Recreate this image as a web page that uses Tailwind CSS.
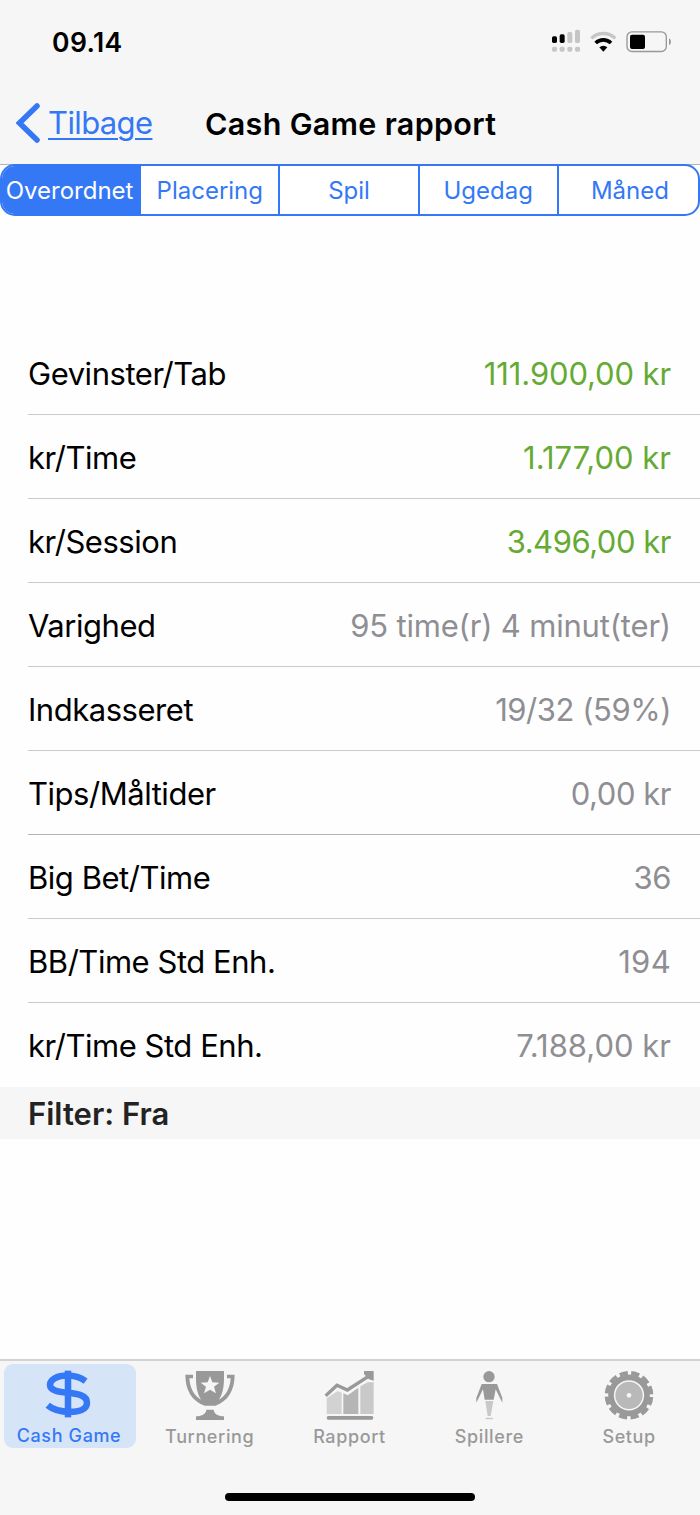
<!DOCTYPE html>
<html lang="da">
<head>
  <meta charset="UTF-8" />
  <meta name="viewport" content="width=device-width, initial-scale=1" />
  <title>Cash Game rapport</title>
  <script src="https://cdn.jsdelivr.net/npm/@tailwindcss/browser@4"></script>
</head>
<body class="bg-[#fefefe] font-['Inter',sans-serif] text-black">
  <div class="flex flex-col w-[700px] h-[1515px] overflow-hidden">

    <!-- Status bar + navigation -->
    <header class="h-[165px] shrink-0 bg-[#f6f6f6] border-b border-[#b4b4b4]">
      <div class="flex items-center justify-between h-[82px] pl-[52px] pr-[26px]">
        <span class="text-[26.5px] font-semibold leading-8 tracking-[0.015em] mt-[2px]">09.14</span>
        <svg class="w-[124px] h-[26px]" viewBox="600 84 372 78">
          <g fill="#000">
            <rect x="606" y="109" width="15" height="20" rx="5" />
            <rect x="629" y="103" width="15" height="26" rx="5" />
          </g>
          <g fill="#c6c6c6">
            <rect x="652" y="96" width="15" height="33" rx="5" />
            <rect x="675" y="89" width="15" height="40" rx="5" />
            <rect x="606" y="140" width="15" height="15" rx="5" />
            <rect x="629" y="140" width="15" height="15" rx="5" />
            <rect x="652" y="140" width="15" height="15" rx="5" />
            <rect x="675" y="140" width="15" height="15" rx="5" />
          </g>
          <path d="M724 115 A52 52 0 0 1 796 115" fill="none" stroke="#c6c6c6" stroke-width="10" />
          <path d="M737 129 A33 33 0 0 1 783 129" fill="none" stroke="#000" stroke-width="11" />
          <path d="M748 142 A17 17 0 0 1 772 142 L760 155 Z" fill="#000" />
          <rect x="831" y="95.500" width="118" height="59" rx="15" fill="none" stroke="#999" stroke-width="4" />
          <rect x="840" y="104" width="45" height="43" rx="6" fill="#000" />
          <path d="M957 115 Q963 117 963 125 Q963 133 957 135 Z" fill="#999" />
        </svg>
      </div>
      <div class="flex items-center h-[82px] pl-4">
        <svg class="w-6 h-10 shrink-0" viewBox="0 0 24 40">
          <path d="M21 3 L3.500 20 L21 37" fill="none" stroke="#3478f6" stroke-width="5.500" stroke-linecap="round" stroke-linejoin="miter" />
        </svg>
        <a href="#" class="w-[158px] pl-2 pt-px text-[31px] tracking-[-0.02em] whitespace-nowrap text-[#3478f6] underline decoration-2 underline-offset-4">Tilbage</a>
        <h1 class="text-[30.5px] font-semibold tracking-[0.01em] whitespace-nowrap pl-[7px] pt-px">Cash Game rapport</h1>
      </div>
    </header>

    <!-- Segmented control -->
    <nav class="grid grid-cols-5 h-[52px] shrink-0 -mt-px rounded-[15px] border-2 border-[#3478f6] overflow-hidden text-[24px] leading-[50px] text-center text-[#3478f6] bg-white divide-x-2 divide-[#3478f6]">
      <span class="bg-[#3478f6] text-white -ml-0.5">Overordnet</span>
      <span>Placering</span>
      <span>Spil</span>
      <span>Ugedag</span>
      <span class="pl-[3px]">Måned</span>
    </nav>

    <!-- Totals -->
    <dl class="mt-[115px] pl-7 text-[31px] tracking-[-0.015em]">
      <div class="flex items-center justify-between h-[84px] pt-1 pr-[29px] border-b border-[#cacaca]">
        <dt>Gevinster/Tab</dt><dd class="text-[#65aa33] tracking-[-0.004em]">111.900,00 kr</dd>
      </div>
      <div class="flex items-center justify-between h-[84px] pt-1 pr-[29px] border-b border-[#cacaca]">
        <dt>kr/Time</dt><dd class="text-[#65aa33] tracking-normal">1.177,00 kr</dd>
      </div>
      <div class="flex items-center justify-between h-[84px] pt-1 pr-[29px] border-b border-[#cacaca]">
        <dt>kr/Session</dt><dd class="text-[#65aa33]">3.496,00 kr</dd>
      </div>
      <div class="flex items-center justify-between h-[84px] pt-1 pr-[29px] border-b border-[#cacaca]">
        <dt>Varighed</dt><dd class="text-[#8e8e93] tracking-[-0.006em]">95 time(r) 4 minut(ter)</dd>
      </div>
      <div class="flex items-center justify-between h-[84px] pt-1 pr-[29px] border-b border-[#cacaca]">
        <dt>Indkasseret</dt><dd class="text-[#8e8e93]">19/32 (59%)</dd>
      </div>
      <div class="flex items-center justify-between h-[84px] pt-1 pr-[29px] border-b border-[#b4b4b4]">
        <dt>Tips/Måltider</dt><dd class="text-[#8e8e93]">0,00 kr</dd>
      </div>
      <div class="flex items-center justify-between h-[84px] pt-1 pr-[29px] border-b border-[#cacaca]">
        <dt>Big Bet/Time</dt><dd class="text-[#8e8e93]">36</dd>
      </div>
      <div class="flex items-center justify-between h-[84px] pt-1 pr-[29px] border-b border-[#cacaca]">
        <dt>BB/Time Std Enh.</dt><dd class="text-[#8e8e93] tracking-[0.01em]">194</dd>
      </div>
      <div class="flex items-center justify-between h-[84px] pt-[3px] pr-[29px]">
        <dt>kr/Time Std Enh.</dt><dd class="text-[#8e8e93] tracking-normal">7.188,00 kr</dd>
      </div>
    </dl>
    <div class="flex items-center h-[52px] shrink-0 pl-7 pt-0.5 bg-[#f6f6f6] text-[31px] font-semibold text-[#232323]">Filter: Fra</div>

    <!-- Tab bar -->
    <footer class="flex flex-col justify-between h-[156px] mt-auto shrink-0 bg-[#f6f6f6] border-t-2 border-[#d2d2d2] pt-[3px] pb-[14px]">
      <div class="grid grid-cols-5 w-[699px] text-[18px] font-medium leading-6 tracking-[0.035em] text-[#999]">
        <div class="flex flex-col items-center gap-[5px] w-[132px] h-[84px] ml-1 pt-[6px] rounded-[9px] bg-[#d6e4f7] text-[#3478f6]">
          <svg class="w-[50px] h-[50px] -ml-1" viewBox="129 60 150 150">
            <rect x="194" y="62" width="20" height="143" fill="#3478f6" />
            <path d="M258 94 C240 81 220 77 202 77 C172 77 149 88 149 105 C149 124 175 127 204 130 C237 133 262 139 262 160 C262 180 238 188 210 188 C180 188 158 182 142 168" fill="none" stroke="#3478f6" stroke-width="20" />
          </svg>
          <span class="whitespace-nowrap -ml-0.5">Cash Game</span>
        </div>
        <div class="flex flex-col items-center gap-[5px] pt-[6px]">
          <svg class="w-[50px] h-[50px]" viewBox="15 15 150 150" fill="#999">
            <path d="M16 29 H39 V40 H28 C30 70 42 92 63 104 C54 90 48 70 48 40 V18 H132 V40 C132 70 126 90 117 104 C138 92 150 70 152 40 H141 V29 H164 C164 75 145 108 106 122 H74 C35 108 16 75 16 29 Z" />
            <path d="M79 134 H101 C102 146 113 153 132 154 V165 H48 V154 C67 153 78 146 79 134 Z" />
            <path d="M90 33 L97 52 L118 53 L102 65 L108 85 L90 74 L72 85 L78 65 L62 53 L83 52 Z" fill="#f6f6f6" />
          </svg>
          <span>Turnering</span>
        </div>
        <div class="flex flex-col items-center gap-[5px] pt-[6px]">
          <svg class="w-[50px] h-[50px]" viewBox="165 60 150 150">
            <path d="M173 145 L206 123 L218 128 V192 H173 Z" fill="#d2d2d2" />
            <path d="M223 130 L236 136 L268 113 V192 H223 Z" fill="#b5b5b5" />
            <path d="M274 109 L296 97 H314 V192 H274 Z" fill="#c9c9c9" />
            <path d="M170 137 L204 106 L235 120 L303 76" fill="none" stroke="#999" stroke-width="10" />
            <path d="M285 63 H314 V92 L300 88 L285 72 Z" fill="#999" />
            <rect x="173" y="198" width="140" height="11" rx="5" fill="#999" />
          </svg>
          <span>Rapport</span>
        </div>
        <div class="flex flex-col items-center gap-[5px] pt-[6px]">
          <svg class="w-[50px] h-[50px]" viewBox="581 60 150 150" fill="#999">
            <circle cx="656" cy="80" r="17" />
            <path d="M634 102 H680 L696 144 V158 L676 118 L670 149 H643 L638 118 L618 158 V144 Z" />
            <path d="M645 153 H669 L661 198 H652 Z" fill="#c9c9c9" />
            <rect x="646" y="203" width="22" height="5" rx="2" fill="#c9c9c9" />
          </svg>
          <span>Spillere</span>
        </div>
        <div class="flex flex-col items-center gap-[5px] pt-[6px]">
          <svg class="w-[50px] h-[50px]" viewBox="225 60 150 150">
            <!-- twelve teeth around the rim -->
            <circle cx="300" cy="136" r="67" fill="none" stroke="#999" stroke-width="12" pathLength="120" stroke-dasharray="7 3" stroke-dashoffset="-1.500" />
            <circle cx="300" cy="136" r="54" fill="none" stroke="#999" stroke-width="17" />
            <circle cx="300" cy="136" r="41" fill="#b9b9b9" />
            <circle cx="300" cy="136" r="7" fill="#f6f6f6" />
          </svg>
          <span>Setup</span>
        </div>
      </div>
      <div class="w-[250px] h-2 mx-auto rounded-full bg-black"></div>
    </footer>
  </div>
</body>
</html>
